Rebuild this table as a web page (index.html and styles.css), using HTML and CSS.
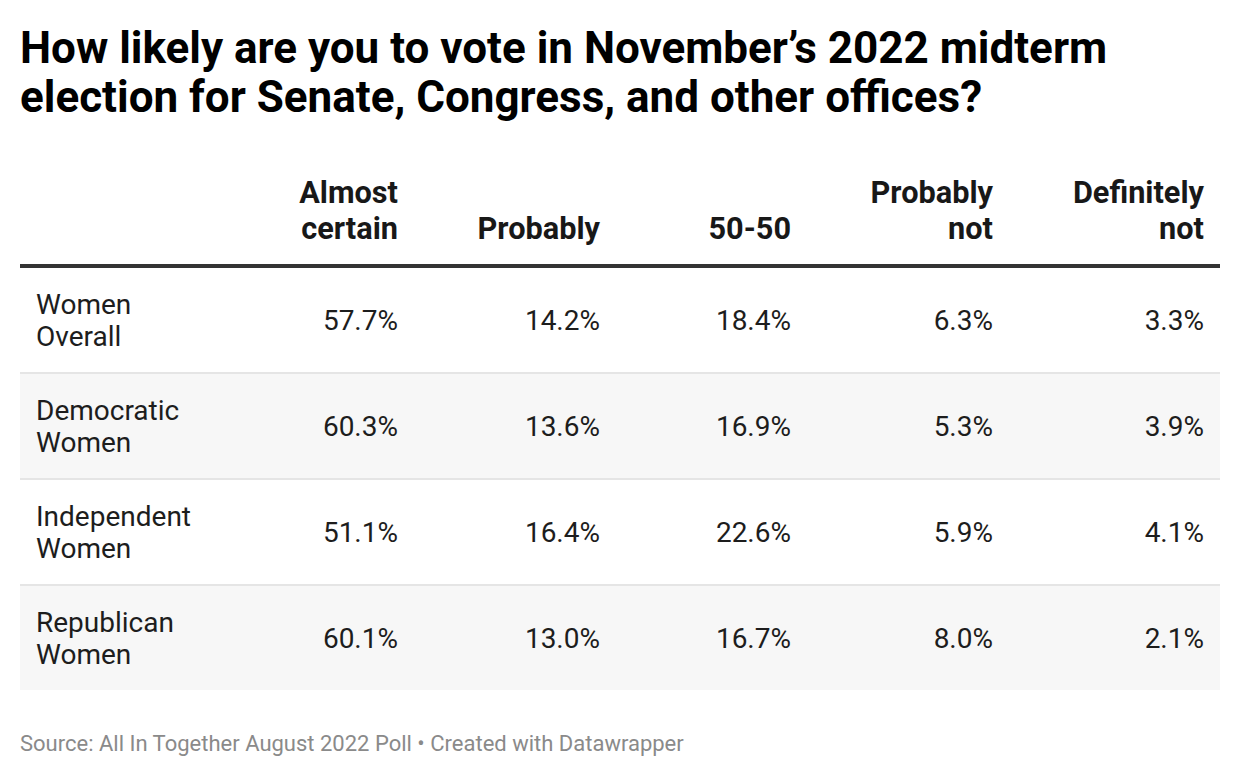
FILE: index.html
```html
<!DOCTYPE html>
<html lang="en">
<head>
<meta charset="utf-8">
<title>Midterm voting likelihood</title>
<link rel="stylesheet" href="styles.css">
</head>
<body>
<div class="chart">
  <h1 class="title">How likely are you to vote in November’s 2022 midterm election for Senate, Congress, and other offices?</h1>
  <table class="data">
    <colgroup>
      <col class="c0"><col class="c1"><col class="c2"><col class="c3"><col class="c4"><col class="c5">
    </colgroup>
    <thead>
      <tr>
        <th class="lbl"></th>
        <th>Almost<br>certain</th>
        <th>Probably</th>
        <th>50-50</th>
        <th>Probably<br>not</th>
        <th>Definitely<br>not</th>
      </tr>
    </thead>
    <tbody>
      <tr>
        <td class="lbl">Women<br>Overall</td>
        <td>57.7%</td><td>14.2%</td><td>18.4%</td><td>6.3%</td><td>3.3%</td>
      </tr>
      <tr class="alt">
        <td class="lbl">Democratic<br>Women</td>
        <td>60.3%</td><td>13.6%</td><td>16.9%</td><td>5.3%</td><td>3.9%</td>
      </tr>
      <tr>
        <td class="lbl">Independent<br>Women</td>
        <td>51.1%</td><td>16.4%</td><td>22.6%</td><td>5.9%</td><td>4.1%</td>
      </tr>
      <tr class="alt last">
        <td class="lbl">Republican<br>Women</td>
        <td>60.1%</td><td>13.0%</td><td>16.7%</td><td>8.0%</td><td>2.1%</td>
      </tr>
    </tbody>
  </table>
  <p class="footer">Source: All In Together August 2022 Poll • Created with Datawrapper</p>
</div>
</body>
</html>
```
FILE: styles.css
```css
html, body {
  margin: 0;
  padding: 0;
  background: #ffffff;
}
body {
  font-family: Roboto, "Liberation Sans", sans-serif;
  color: #1d1d1d;
}
.chart {
  padding: 24px 20px 0 20px;
}
.title {
  margin: 0;
  font-size: 44px;
  line-height: 49px;
  font-weight: 700;
  color: #000000;
}
.data {
  margin-top: 53px;
  width: 1200px;
  table-layout: fixed;
  border-collapse: collapse;
  border-spacing: 0;
}
.c0 { width: 230px; }
.c1 { width: 164px; }
.c2 { width: 202px; }
.c3 { width: 191px; }
.c4 { width: 202px; }
.c5 { width: 211px; }
.data th {
  font-size: 30.7px;
  line-height: 36px;
  font-weight: 700;
  color: #181818;
  text-align: right;
  vertical-align: bottom;
  padding: 0 16px 17px 0;
  border-bottom: 4px solid #333333;
}
.data td {
  font-size: 28px;
  line-height: 32px;
  text-align: right;
  vertical-align: middle;
  padding: 1px 16px 0 0;
  height: 103px;
  border-bottom: 2px solid #e5e5e5;
}
.data .lbl {
  text-align: left;
  padding-left: 16px;
}
.data tr.alt td {
  background: #f7f7f7;
}
.data tr.last td {
  border-bottom: none;
}
.footer {
  margin: 42px 0 0 0;
  font-size: 22px;
  line-height: 24px;
  color: #8a8a8a;
}
```
